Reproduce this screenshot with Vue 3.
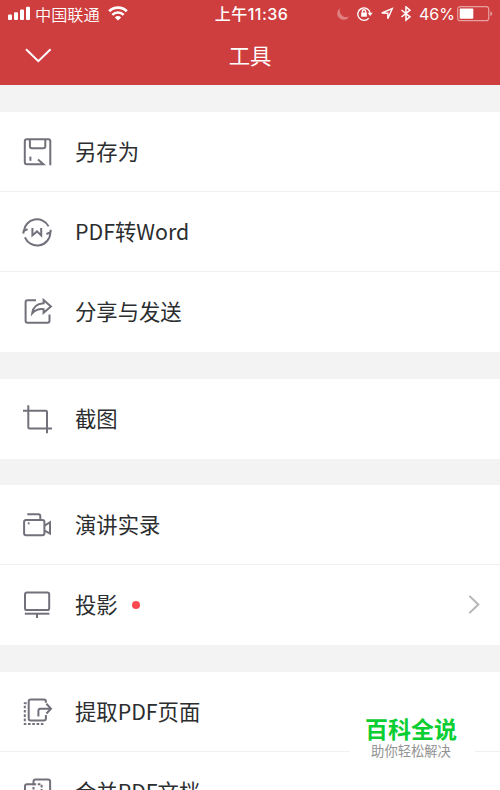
<template>
  <div class="screen">
    <header class="header">
      <div class="status">
        <div class="status-left">
          <svg class="signal" width="24" height="16" viewBox="0 0 24 16" fill="#fff">
            <rect x="0" y="8.6" width="4" height="5.4" rx="1" />
            <rect x="6" y="6.3" width="4" height="7.7" rx="1" />
            <rect x="12" y="3.6" width="4" height="10.4" rx="1" />
            <rect x="18" y=".8" width="4" height="13.2" rx="1" />
          </svg>
          <span class="carrier">中国联通</span>
          <svg width="20" height="16" viewBox="0 0 20 16" fill="none" stroke="#fff">
            <path d="M1.2 5.3A12.4 12.4 0 0 1 18.8 5.3" stroke-width="2.7" />
            <path d="M4.3 8.8A8.2 8.2 0 0 1 15.7 8.8" stroke-width="2.5" />
            <path d="M6.8 11.4A4.7 4.7 0 0 1 13.2 11.4L10 14.4Z" fill="#fff" stroke="none" />
          </svg>
        </div>
        <div class="time">上午11:36</div>
        <div class="status-right">
          <svg class="moon" width="14" height="14" viewBox="0 0 14 14">
            <path d="M4.6 .9A6.3 6.3 0 1 0 13.2 9.2A6.2 6.2 0 0 1 4.6 .9Z" fill="#fff" opacity=".35" />
          </svg>
          <svg class="lock" width="16" height="16" viewBox="0 0 16 16" fill="none" stroke="#fff" stroke-width="1.4">
            <path d="M11.8 12.1A6.2 6.2 0 1 1 13.1 6.9" />
            <path d="M10.5 6.7H15.8L13.1 9.9Z" fill="#fff" stroke="none" />
            <rect x="4.2" y="6.5" width="5.6" height="4.2" fill="#fff" stroke="none" />
            <path d="M5.4 6.7V5.4A1.6 1.6 0 0 1 8.6 5.4V6.7" />
          </svg>
          <svg class="arrow" width="14" height="14" viewBox="0 0 14 14" fill="none" stroke="#fff" stroke-width="1.4">
            <path d="M1.8 6L12.3 1.5L7.8 11.8V6.2Z" />
          </svg>
          <svg class="bluetooth" width="12" height="16" viewBox="0 0 12 16" fill="none" stroke="#fff" stroke-width="1.5">
            <path d="M1.5 4L10 10.8L6 14.1V.9L10 4.2L1.5 11" />
          </svg>
          <span class="percent">46%</span>
          <svg width="36" height="16" viewBox="0 0 36 16">
            <rect x=".7" y=".7" width="31" height="14" rx="2.5" fill="none" stroke="#fff" stroke-width="1.2" opacity=".5" />
            <rect x="2.7" y="2.5" width="13.6" height="10.2" rx=".8" fill="#fff" />
            <path d="M33.4 5.3Q35.2 6 35.2 7.7T33.4 10.1Z" fill="#fff" opacity=".5" />
          </svg>
        </div>
      </div>
      <div class="navbar">
        <svg class="collapse" width="28" height="18" viewBox="0 0 28 18" fill="none" stroke="#fff" stroke-width="2">
          <path d="M2 2.2L14.3 14.2L26.6 2.2" />
        </svg>
        <h1 class="title">工具</h1>
      </div>
    </header>

    <section v-for="(group, index) in groups" :key="index" class="group">
      <div v-for="item in group" :key="item.label" class="row">
        <svg class="row-icon" width="32" height="32" viewBox="0 0 32 32">
          <path
            v-for="(shape, i) in item.shapes"
            :key="i"
            :d="shape.d || shape"
            :stroke-dasharray="shape.dash"
          />
        </svg>
        <span class="label">{{ item.label }}</span>
        <span v-if="item.dot" class="dot"></span>
        <svg v-if="item.more" class="more" width="13" height="20" viewBox="0 0 13 20">
          <path d="M2.4 .9L11.3 9.5L2.4 18.1" fill="none" stroke="#b5b5b8" stroke-width="2" />
        </svg>
      </div>
    </section>

    <div class="watermark">
      <div class="watermark-name">百科全说</div>
      <div class="watermark-slogan">助你轻松解决</div>
    </div>
  </div>
</template>

<script setup>
const groups = [
  [
    {
      label: '另存为',
      shapes: [
        'M17 23.6L22.4 28.2H5.8Q3.8 28.2 3.8 26.2V5.2Q3.8 3.2 5.8 3.2H27.3Q29.3 3.2 29.3 5.2V29.2',
        'M8.9 3.2V10.2Q8.9 12.2 10.9 12.2H22.3Q24.3 12.2 24.3 10.2V3.2',
        'M9.4 20.6V24.8'
      ]
    },
    {
      label: 'PDF转Word',
      shapes: [
        'M6.6 13.2L2.8 15A13.2 13.2 0 0 1 27.6 10.4',
        'M2.8 15L2.3 17.6',
        'M25.4 18L29.3 16.4A13.2 13.2 0 0 1 3.9 21.4',
        'M29.3 16.4L29.8 13.8',
        'M11.4 12V19.4L16 15.4L20.2 19.4V12'
      ]
    },
    {
      label: '分享与发送',
      shapes: [
        'M15 4.3H6.5Q4.6 4.3 4.6 6.2V24.8Q4.6 26.8 6.5 26.8H26.6Q28.5 26.8 28.5 24.8V18.6',
        'M22.6 4L29.9 10.4L22.6 16.8V13.2C17.4 12.7 14.2 14 11.2 17.4C11.9 11.2 15.8 7.6 22.6 7.2Z'
      ]
    }
  ],
  [
    {
      label: '截图',
      shapes: [
        'M2 7.7H24.7Q26 7.7 26 9V30.2',
        'M7.3 2.3V24.2Q7.3 25.4 8.5 25.4H31'
      ]
    }
  ],
  [
    {
      label: '演讲实录',
      shapes: [
        'M5 11H21.4Q23.4 11 23.4 13V24.3Q23.4 26.3 21.4 26.3H5Q3.1 26.3 3.1 24.3V13Q3.1 11 5 11Z',
        'M6.3 5.2H17.4Q19.3 5.2 19.3 7V10.5',
        'M23.6 16.6L29 13.2V24.6L23.6 21.6',
        'M6.8 14.3H8.6'
      ]
    },
    {
      label: '投影',
      dot: true,
      more: true,
      shapes: [
        'M6 3.4H26.2Q28.2 3.4 28.2 5.4V19.2Q28.2 21.1 26.2 21.1H6Q4 21.1 4 19.2V5.4Q4 3.4 6 3.4Z',
        'M3.8 24.7H28.4',
        'M16 24.7V28.9'
      ]
    }
  ],
  [
    {
      label: '提取PDF页面',
      shapes: [
        'M24.9 6.7V5.4Q24.9 3.4 22.9 3.4H9.7Q7.7 3.4 7.7 5.4V22.5Q7.7 24.5 9.7 24.5H22.9Q24.9 24.5 24.9 22.5V19',
        'M17.4 20.5V14.7Q17.4 12.8 19.4 12.8H29.6',
        'M25.4 7.8L30 12.7L25.4 17.5',
        { d: 'M5.6 7.2H3.8V28H21.4V26.6', dash: '2.6 1.7' }
      ]
    },
    {
      label: '合并PDF文档',
      shapes: [
        'M20.6 24.3H29.1V5.4Q29.1 3.4 27.1 3.4H14.5Q12.5 3.4 12.5 5.4V8.3H6Q4 8.3 4 10.3V29H20.6V24.3',
        { d: 'M12.5 8.3H20.6V24.3H12.5Z', dash: '2.6 1.7' }
      ]
    }
  ]
]
</script>

<style>
body {
  margin: 0;
}
</style>

<style scoped>
.screen {
  position: relative;
  width: 500px;
  height: 790px;
  overflow: hidden;
  background: #f3f3f3;
  font-family: "Noto Sans CJK SC", sans-serif;
}

.header {
  height: 85.33px;
  background: #ce3e3e;
  color: #fff;
}

.status {
  display: grid;
  grid-template-columns: 1fr auto 1fr;
  align-items: center;
  height: 27px;
  padding: 0 7px 0 8px;
}

.status-left,
.status-right {
  display: flex;
  align-items: center;
}

.status-right {
  justify-content: flex-end;
}

.carrier {
  margin: 0 8px 0 3px;
  font-size: 16.2px;
  font-weight: 350;
  line-height: 26px;
}

.time {
  padding-left: 2px;
  font-family: Inter, "Noto Sans CJK SC", sans-serif;
  font-size: 16px;
  font-weight: 500;
  letter-spacing: 0.5px;
  line-height: 26px;
}

.moon {
  margin-right: 7px;
}

.lock {
  margin-right: 7px;
}

.arrow {
  margin-right: 6px;
}

.bluetooth {
  margin-right: 7px;
}

.percent {
  margin-right: 2px;
  font-family: Inter, sans-serif;
  font-size: 16px;
}

.navbar {
  position: relative;
  display: flex;
  justify-content: center;
  align-items: center;
  height: 56px;
}

.collapse {
  position: absolute;
  left: 24px;
  top: 20px;
}

.title {
  margin: 0;
  font-size: 21.33px;
  font-weight: 400;
  line-height: 32px;
}

.group {
  margin-top: 26.67px;
  background: #fff;
}

.row {
  display: flex;
  align-items: center;
  box-sizing: border-box;
  height: 80px;
  padding: 0 20px 0 21px;
}

.row:not(:last-child) {
  box-shadow: inset 0 -1px #f0f0f0;
}

.row-icon {
  flex: none;
  margin-right: 22px;
  fill: none;
  stroke: #72717b;
  stroke-width: 2;
}

.label {
  padding-bottom: 2px;
  color: #2b2d2e;
  font-size: 21.33px;
  line-height: 32px;
}

.dot {
  width: 8px;
  height: 8px;
  margin-left: 14px;
  border-radius: 50%;
  background: #fc4a50;
}

.more {
  margin-left: auto;
}

.watermark {
  position: absolute;
  left: 350px;
  top: 711px;
  width: 125px;
  height: 60px;
  box-sizing: border-box;
  padding: 2px 3px 0 0;
  background: #fff;
  text-align: center;
}

.watermark-name {
  color: #0bce32;
  font-size: 23px;
  font-weight: 700;
  line-height: 31px;
}

.watermark-slogan {
  color: #929292;
  font-size: 13.3px;
  line-height: 14px;
}
</style>
